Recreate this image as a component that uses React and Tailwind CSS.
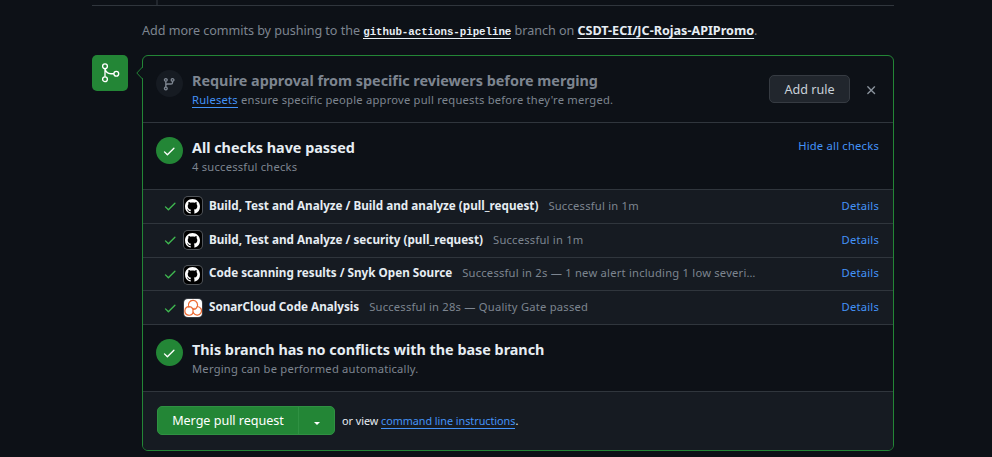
import React from 'react';

const PATHS = {
  branch:
    'M9.5 3.25a2.25 2.25 0 1 1 3 2.122V6A2.5 2.5 0 0 1 10 8.5H6a1 1 0 0 0-1 1v1.128a2.251 2.251 0 1 1-1.5 0V5.372a2.25 2.25 0 1 1 1.5 0v1.836A2.493 2.493 0 0 1 6 7h4a1 1 0 0 0 1-1v-.628A2.25 2.25 0 0 1 9.5 3.25Zm-6 0a.75.75 0 1 0 1.5 0 .75.75 0 0 0-1.5 0Zm8.25-.75a.75.75 0 1 0 0 1.5.75.75 0 0 0 0-1.5ZM4.25 12a.75.75 0 1 0 0 1.5.75.75 0 0 0 0-1.5Z',
  check:
    'M13.78 4.22a.75.75 0 0 1 0 1.06l-7.25 7.25a.75.75 0 0 1-1.06 0L2.22 9.28a.751.751 0 0 1 .018-1.042.751.751 0 0 1 1.042-.018L6 10.94l6.72-6.72a.75.75 0 0 1 1.06 0Z',
  x: 'M3.72 3.72a.75.75 0 0 1 1.06 0L8 6.94l3.22-3.22a.749.749 0 0 1 1.275.326.749.749 0 0 1-.215.734L9.06 8l3.22 3.22a.749.749 0 0 1-.326 1.275.749.749 0 0 1-.734-.215L8 9.06l-3.22 3.22a.751.751 0 0 1-1.042-.018.751.751 0 0 1-.018-1.042L6.94 8 3.72 4.78a.75.75 0 0 1 0-1.06Z',
  github:
    'M8 0c4.42 0 8 3.58 8 8a8.013 8.013 0 0 1-5.45 7.59c-.4.08-.55-.17-.55-.38 0-.27.01-1.13.01-2.2 0-.75-.25-1.23-.54-1.48 1.78-.2 3.65-.88 3.65-3.95 0-.88-.31-1.59-.82-2.15.08-.2.36-1.02-.08-2.12 0 0-.67-.22-2.2.82-.64-.18-1.32-.27-2-.27-.68 0-1.36.09-2 .27-1.53-1.03-2.2-.82-2.2-.82-.44 1.1-.16 1.92-.08 2.12-.51.56-.82 1.28-.82 2.15 0 3.06 1.86 3.75 3.64 3.95-.23.2-.44.55-.51 1.07-.46.21-1.61.55-2.33-.66-.15-.24-.6-.83-1.23-.82-.67.01-.27.38.01.53.34.19.73.9.82 1.13.16.45.68 1.31 2.69.94 0 .67.01 1.3.01 1.49 0 .21-.15.45-.55.38A7.995 7.995 0 0 1 0 8c0-4.42 3.58-8 8-8Z',
};

function Icon({ name, className }) {
  return (
    <svg viewBox="0 0 16 16" fill="currentColor" className={`shrink-0 ${className}`}>
      <path d={PATHS[name]} />
    </svg>
  );
}

function MergeIcon() {
  return (
    <svg viewBox="0 0 22 22" fill="none" stroke="currentColor" strokeWidth="1.35" className="h-[22px] w-[22px]">
      <circle cx="6" cy="4.3" r="2.4" />
      <circle cx="6" cy="17.2" r="2.4" />
      <circle cx="17.3" cy="11.7" r="2.4" />
      <path d="M6 6.7V14.8M6 6.7C6.6 9.8 8.9 11.7 12 11.7H14.9" />
    </svg>
  );
}

function Avatar({ kind }) {
  if (kind === 'sonar') {
    return (
      <span className="flex h-[18px] w-[18px] shrink-0 items-center justify-center rounded-[4px] bg-white ring-1 ring-white/15">
        <svg
          viewBox="0 0 18 18"
          className="h-[18px] w-[18px]"
          fill="none"
          stroke="#ec6a33"
          strokeWidth="1.2"
          strokeLinecap="round"
        >
          <path d="M4.8 7.9A4.6 4.6 0 1 1 12.9 8.4C12.2 9.6 11 10.3 9.6 10.4" />
          <path d="M13.3 7.5A4.3 4.3 0 1 1 9.6 14.2C8.7 12.7 8.8 10.6 10 9.3" />
          <path d="M9.2 13.4A4.3 4.3 0 1 1 5 7.6C6.8 7.6 8.3 8.6 8.9 10.2" />
        </svg>
      </span>
    );
  }
  return (
    <span className="flex h-[18px] w-[18px] shrink-0 items-center justify-center rounded-[4px] bg-black ring-1 ring-white/25">
      <Icon name="github" className="h-[15px] w-[15px] text-white" />
    </span>
  );
}

const CHECKS = [
  {
    name: 'Build, Test and Analyze / Build and analyze (pull_request)',
    status: 'Successful in 1m',
    row: 'h-[34px]',
    icon: 'mb-px',
    label: 'mb-[3px]',
  },
  {
    name: 'Build, Test and Analyze / security (pull_request)',
    status: 'Successful in 1m',
    row: 'h-[34px]',
    icon: 'mb-px',
    label: 'mb-[3px]',
  },
  {
    name: 'Code scanning results / Snyk Open Source',
    status: 'Successful in 2s — 1 new alert including 1 low severi…',
    row: 'h-[33px]',
    icon: 'mt-px',
    label: 'mb-[4px]',
  },
  {
    name: 'SonarCloud Code Analysis',
    status: 'Successful in 28s — Quality Gate passed',
    row: 'h-[34px]',
    icon: 'mt-px',
    label: 'mb-[3px]',
    kind: 'sonar',
  },
];

function CheckRow({ check }) {
  return (
    <div className={`flex items-center border-b border-[#30363d] bg-[#161b22] pr-[14px] pl-[20px] ${check.row}`}>
      <Icon name="check" className={`h-[14.4px] w-[14.4px] text-[#3fb950] ${check.icon}`} />
      <span className={`ml-[6.6px] flex ${check.icon}`}>
        <Avatar kind={check.kind} />
      </span>
      <span className={`ml-[7px] text-[11.7px] leading-[18px] font-bold text-[#e6edf3] ${check.label}`}>
        {check.name}
      </span>
      <span className="mb-[2px] ml-[10px] text-[11.2px] leading-[18px] tracking-[0.22px] text-[#7d8590]">
        {check.status}
      </span>
      <a className="mb-[2px] ml-auto text-[11.2px] leading-[18px] tracking-[0.22px] text-[#4493f8]">Details</a>
    </div>
  );
}

function Section({ icon, iconClass, title, titleClass, children, action }) {
  return (
    <div className="flex h-[67px] border-b border-[#30363d] pt-[14px] pl-[13px] pr-[14px]">
      <span className={`flex h-[27px] w-[27px] shrink-0 items-center justify-center rounded-full ${iconClass}`}>
        <Icon name={icon} className="mt-px h-[14.4px] w-[14.4px]" />
      </span>
      <div className="ml-[9px] whitespace-nowrap">
        <h3 className={`text-[14.4px] leading-[21px] font-bold tracking-[-0.02px] ${titleClass}`}>{title}</h3>
        <p className="text-[11.2px] leading-[17px] tracking-[0.22px] text-[#7d8590]">{children}</p>
      </div>
      {action}
    </div>
  );
}

export default function App() {
  return (
    <div className="h-[457px] w-[992px] overflow-hidden bg-[#0d1117] pl-[92px] font-['Noto_Sans',sans-serif]">
      <div className="h-[6px] w-[802px] border-b border-[#30363d] pl-16">
        <div className="h-[5px] w-[2px] bg-[#21262d]" />
      </div>

      <p className="mt-[15px] ml-[50px] h-[34px] text-[12.6px] leading-[19px] tracking-[-0.04px] whitespace-nowrap text-[#7d8590]">
        Add more commits by pushing to the{' '}
        <a className="border-b border-[#e6edf3] font-['Liberation_Mono',monospace] text-[10.8px] font-bold text-[#e6edf3]">
          github-actions-pipeline
        </a>{' '}
        branch on{' '}
        <a className="font-bold tracking-normal text-[#e6edf3] underline underline-offset-[3px]">
          CSDT-ECI/JC-Rojas-APIPromo
        </a>
        .
      </p>

      <div className="flex">
        <div className="flex h-9 w-9 items-center justify-center rounded-[5px] bg-[#238636] text-white">
          <MergeIcon />
        </div>

        <div className="relative ml-[14px] h-[396px] w-[752px] rounded-[6px] border border-[#238636]">
          <svg viewBox="0 0 8 14" className="absolute top-[10px] -left-[7px] h-[14px] w-[8px]">
            <path d="M8 0.5 0.8 7 8 13.5Z" fill="#0d1117" />
            <path d="M6.5 1 0.8 7 6.5 13" fill="none" stroke="#238636" />
          </svg>

          <Section
            icon="branch"
            iconClass="bg-[#161b22] text-[#7d8590]"
            title="Require approval from specific reviewers before merging"
            titleClass="text-[#7d8590]"
            action={
              <div className="mt-[5px] ml-auto flex h-7 items-center">
                <button className="h-7 w-[81px] rounded-[5px] border border-[#363b42] bg-[#21262d] pt-[2px] pl-px text-[12.6px] text-[#c9d1d9]">
                  Add rule
                </button>
                <Icon name="x" className="mt-[2px] mr-px ml-[14px] h-[14.4px] w-[14.4px] text-[#8b949e]" />
              </div>
            }
          >
            <a className="border-b border-[#4493f8] text-[#4493f8]">Rulesets</a> ensure specific people approve pull
            requests before they're merged.
          </Section>

          <Section
            icon="check"
            iconClass="bg-[#238636] text-white"
            title="All checks have passed"
            titleClass="text-[#e6edf3]"
            action={
              <a className="ml-auto text-[11.2px] leading-[17px] tracking-[0.22px] text-[#4493f8]">Hide all checks</a>
            }
          >
            4 successful checks
          </Section>

          {CHECKS.map((check) => (
            <CheckRow key={check.name} check={check} />
          ))}

          <Section
            icon="check"
            iconClass="bg-[#238636] text-white"
            title="This branch has no conflicts with the base branch"
            titleClass="text-[#e6edf3]"
          >
            Merging can be performed automatically.
          </Section>

          <div className="flex h-[58px] items-start rounded-b-[5px] bg-[#161b22] pt-[14px] pl-[14px]">
            <div className="flex h-[29px] w-[178px] rounded-[5px] border border-[#2f9142] bg-[#238636] text-[12.6px] text-white">
              <button className="w-[141px] border-r border-[#2f9142] pt-[2px] tracking-[-0.03px]">
                Merge pull request
              </button>
              <button className="flex flex-1 items-center justify-center">
                <span className="mt-[6px] border-x-[3.5px] border-t-[3.5px] border-x-transparent border-t-white" />
              </button>
            </div>
            <span className="mt-[6px] ml-[7px] text-[10.8px] leading-[18px] tracking-[-0.03px] text-[#e6edf3]">
              or view <a className="border-b border-[#4493f8] text-[#4493f8]">command line instructions</a>.
            </span>
          </div>
        </div>
      </div>
    </div>
  );
}
